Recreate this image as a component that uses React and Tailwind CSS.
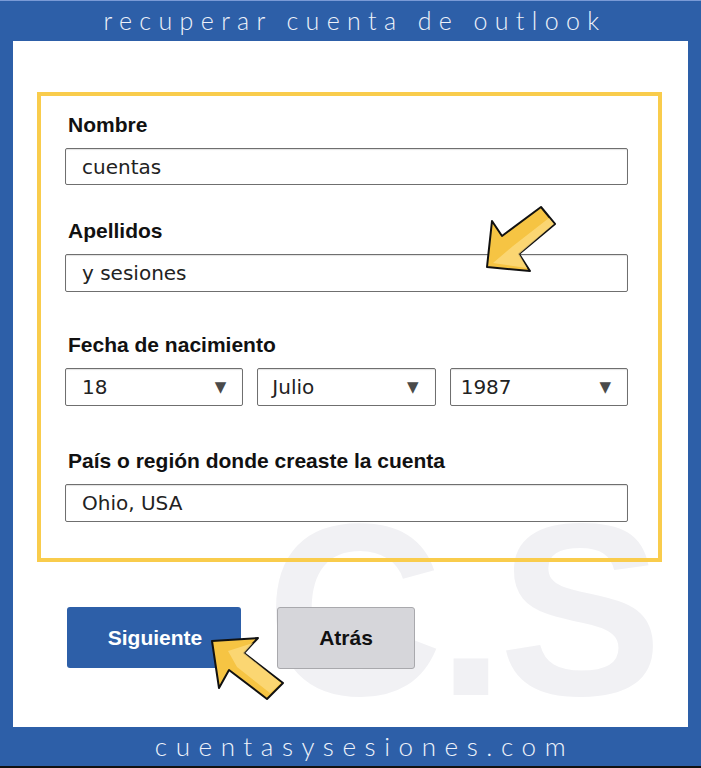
import React from "react";

const inputText = { fontFamily: '"DejaVu Sans", sans-serif' };
const labelFont = { fontFamily: '"Liberation Sans", Arial, sans-serif' };

function Label({ children }) {
  return (
    <div className="ml-[3px] h-[24px] text-[21px] leading-[24px] font-bold text-[#111]" style={labelFont}>
      {children}
    </div>
  );
}

function Field({ value, h = "h-[37px]" }) {
  return (
    <div
      className={`mt-[11px] ${h} w-[563px] bg-white border border-[#6f6f6f] rounded-[2px] shadow-[inset_0_1px_1px_rgba(0,0,0,0.12)] flex items-center pl-[16px] text-[20px] text-[#222]`}
      style={inputText}
    >
      {value}
    </div>
  );
}

function Select({ value, pl }) {
  return (
    <div
      className={`h-[38px] bg-white border border-[#6f6f6f] rounded-[2px] shadow-[inset_0_1px_1px_rgba(0,0,0,0.12)] flex items-center justify-between ${pl} pr-[16px] text-[20px] text-[#222]`}
      style={inputText}
    >
      <span>{value}</span>
      <span className="text-[15px] text-[#4a4a4a]">▼</span>
    </div>
  );
}

function Arrow({ points, shine }) {
  return (
    <g>
      <polygon points={points} fill="#f6c443" stroke="#111" strokeWidth="2" strokeLinejoin="round" />
      <polygon points={shine} fill="#fcdb7e" opacity="0.8" />
    </g>
  );
}

export default function App() {
  return (
    <div className="w-[701px] h-[768px] bg-[#2d5fa8] flex flex-col overflow-hidden border-t border-[#7a9ad6] border-b-2 border-b-[#111]">
      <div
        className="h-[40px] flex items-center justify-center text-[25px] font-light tracking-[0.295em] text-[#eef2fa] pl-[9px]"
        style={{ fontFamily: 'Lato, "DejaVu Sans", sans-serif' }}
      >
        recuperar cuenta de outlook
      </div>

      <div className="relative mx-[13px] flex-1 bg-white overflow-hidden">
        {/* watermark */}
        <div
          className="absolute left-[253px] top-[447px] text-[245px] leading-none font-bold text-[#f1f1f4] tracking-[-6px] select-none"
          style={labelFont}
        >
          C.S
        </div>

        <div className="relative pt-[51px] pl-[24px]">
          <div className="w-[625px] h-[470px] border-4 border-[#f9cc4c] pt-[17px] pl-[24px]">
            <Label>Nombre</Label>
            <Field value="cuentas" />

            <div className="mt-[34px]">
              <Label>Apellidos</Label>
              <Field value="y sesiones" h="h-[38px]" />
            </div>

            <div className="mt-[41px]">
              <Label>Fecha de nacimiento</Label>
              <div className="mt-[11px] w-[563px] grid grid-cols-3 gap-[14px]">
                <Select value="18" pl="pl-[16px]" />
                <Select value="Julio" pl="pl-[14px]" />
                <Select value="1987" pl="pl-[10px]" />
              </div>
            </div>

            <div className="mt-[43px]">
              <Label>País o región donde creaste la cuenta</Label>
              <Field value="Ohio, USA" h="h-[38px]" />
            </div>
          </div>

          <div className="mt-[45px] ml-[30px] flex gap-[36px]">
            <div
              className="w-[174px] h-[61px] bg-[#2d5fa8] rounded-[3px] flex items-center justify-center text-white text-[21px] font-bold pl-[2px]"
              style={labelFont}
            >
              Siguiente
            </div>
            <div
              className="w-[138px] h-[62px] bg-[#d6d6da] border border-[#a9a9ad] rounded-[3px] flex items-center justify-center text-[#111] text-[21px] font-bold"
              style={labelFont}
            >
              Atrás
            </div>
          </div>
        </div>

        <svg className="absolute inset-0 pointer-events-none" width="675" height="686">
          <Arrow
            points="474,226 479,180 489,195 528,166 542,183 506,213 517,230"
            shine="480,222 500,205 536,177 541,183 506,213 514,227"
          />
          <Arrow
            points="199,600 245,597 231,612 270,642 254,658 216,629 206,647"
            shine="215,610 240,602 231,612 268,642 257,652 224,626"
          />
        </svg>
      </div>

      <div
        className="h-[39px] flex items-center justify-center text-[26px] font-light tracking-[0.33em] text-[#eef2fa] pl-[28px]"
        style={{ fontFamily: 'Lato, "DejaVu Sans", sans-serif' }}
      >
        cuentasysesiones.com
      </div>
    </div>
  );
}
